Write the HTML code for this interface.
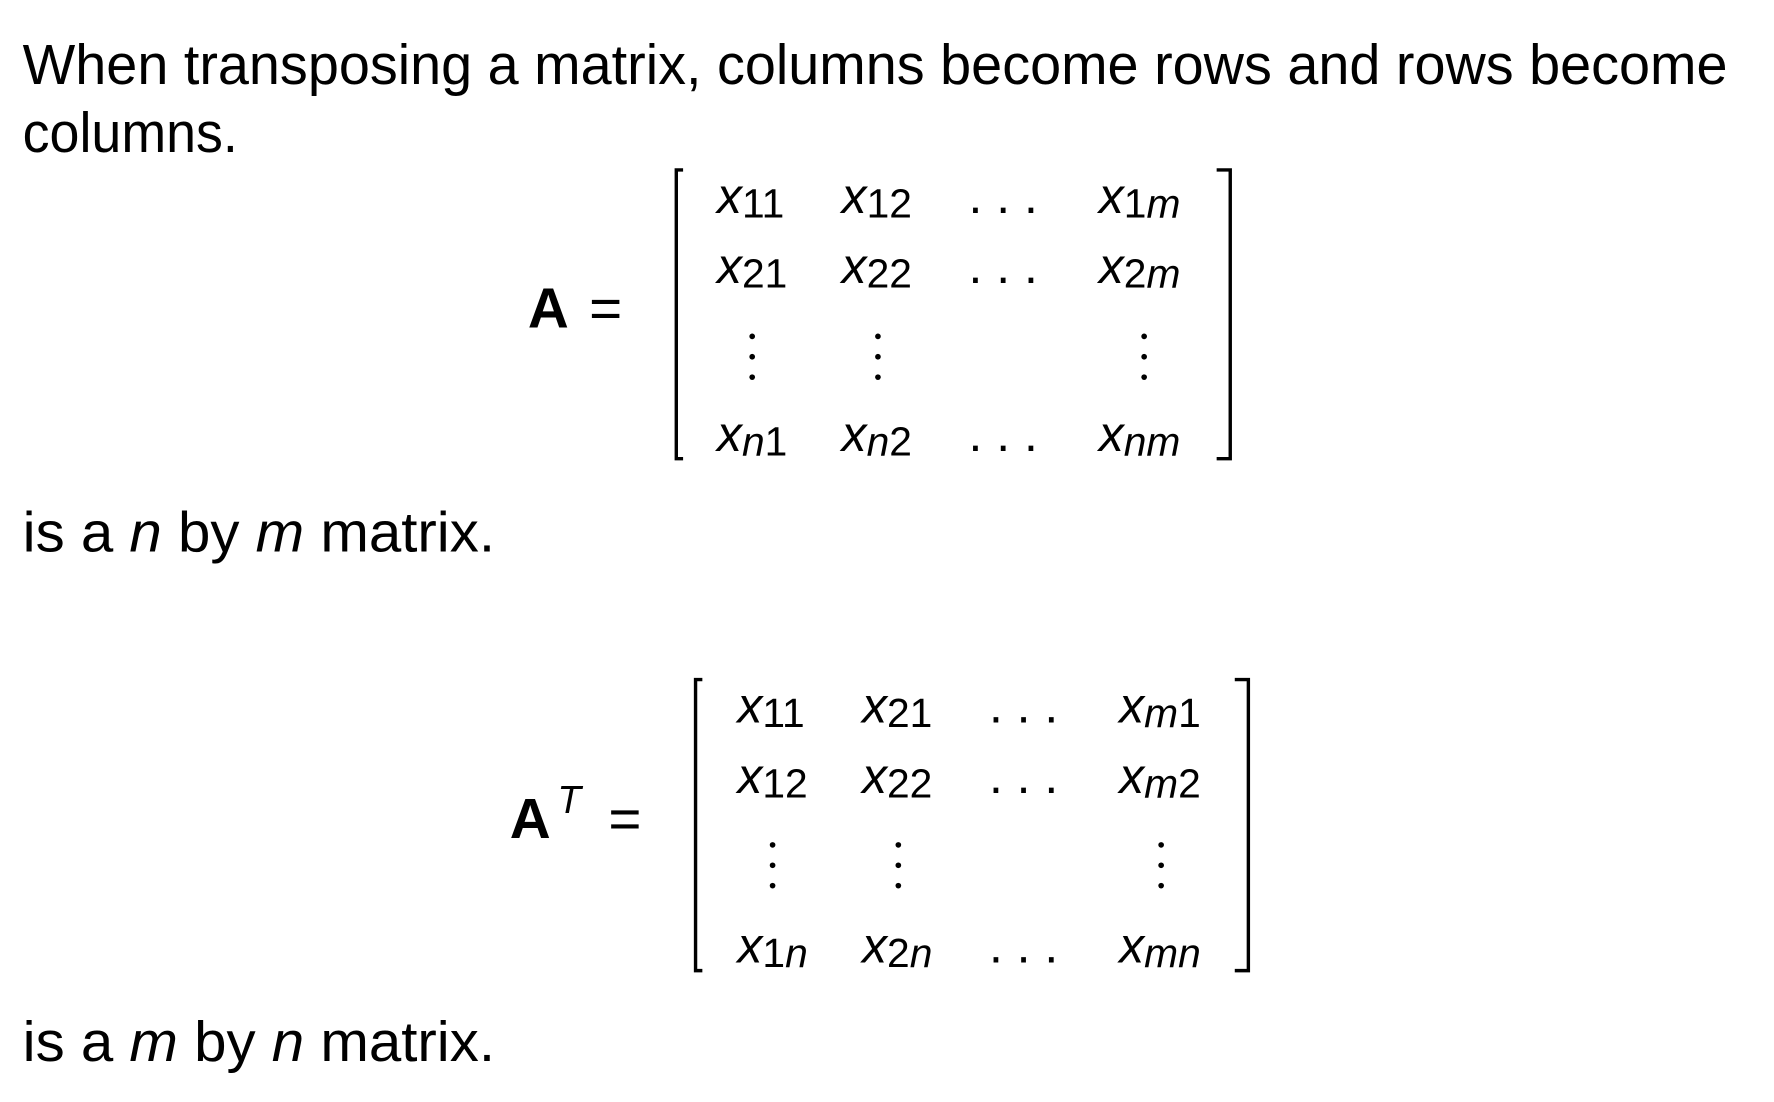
<!DOCTYPE html>
<html><head><meta charset="utf-8"><style>
html,body{margin:0;padding:0;background:#fff;}
svg{display:block}
text{font-family:"Liberation Sans",sans-serif;fill:#000}
.i{font-style:italic}
.s{font-size:36px}
</style></head><body>
<svg width="1774" height="1102" viewBox="0 0 1566 973" preserveAspectRatio="none" xmlns="http://www.w3.org/2000/svg">
<g font-size="50">
<text x="20" y="74" textLength="1505" lengthAdjust="spacingAndGlyphs">When transposing a matrix, columns become rows and rows become</text>
<text x="20" y="134" textLength="190" lengthAdjust="spacingAndGlyphs">columns.</text>
<text x="20" y="487" textLength="417" lengthAdjust="spacingAndGlyphs">is a <tspan class="i">n</tspan> by <tspan class="i">m</tspan> matrix.</text>
<text x="20" y="937" textLength="417" lengthAdjust="spacingAndGlyphs">is a <tspan class="i">m</tspan> by <tspan class="i">n</tspan> matrix.</text>
<text x="466" y="289" font-weight="bold">A</text>
<text x="520" y="289">=</text>
</g>
<g fill="none" stroke="#000" stroke-width="3">
<path d="M603 150 H597 V405 H603"/>
<path d="M1074 150 H1086 V405 H1074"/>
<path d="M620 600 H614 V857 H620"/>
<path d="M1090 600 H1102 V857 H1090"/>
</g>
<g font-size="44">
<text x="633" y="188"><tspan class="i">x</tspan><tspan class="s" dy="4">11</tspan></text>
<text x="743" y="188"><tspan class="i">x</tspan><tspan class="s" dy="4">12</tspan></text>
<text x="855" y="188">. . .</text>
<text x="970" y="188"><tspan class="i">x</tspan><tspan class="s" dy="4">1<tspan class="i">m</tspan></tspan></text>
<text x="633" y="250"><tspan class="i">x</tspan><tspan class="s" dy="4">21</tspan></text>
<text x="743" y="250"><tspan class="i">x</tspan><tspan class="s" dy="4">22</tspan></text>
<text x="855" y="250">. . .</text>
<text x="970" y="250"><tspan class="i">x</tspan><tspan class="s" dy="4">2<tspan class="i">m</tspan></tspan></text>
<text x="633" y="398"><tspan class="i">x</tspan><tspan class="s" dy="4"><tspan class="i">n</tspan>1</tspan></text>
<text x="743" y="398"><tspan class="i">x</tspan><tspan class="s" dy="4"><tspan class="i">n</tspan>2</tspan></text>
<text x="855" y="398">. . .</text>
<text x="970" y="398"><tspan class="i">x</tspan><tspan class="s" dy="4"><tspan class="i">nm</tspan></tspan></text>
</g>
<g fill="#000">
<circle cx="664" cy="297" r="2.5"/><circle cx="664" cy="315" r="2.5"/><circle cx="664" cy="333" r="2.5"/>
<circle cx="775" cy="297" r="2.5"/><circle cx="775" cy="315" r="2.5"/><circle cx="775" cy="333" r="2.5"/>
<circle cx="1010" cy="297" r="2.5"/><circle cx="1010" cy="315" r="2.5"/><circle cx="1010" cy="333" r="2.5"/>
<circle cx="682" cy="746" r="2.5"/><circle cx="682" cy="764" r="2.5"/><circle cx="682" cy="782" r="2.5"/>
<circle cx="793" cy="746" r="2.5"/><circle cx="793" cy="764" r="2.5"/><circle cx="793" cy="782" r="2.5"/>
<circle cx="1025" cy="746" r="2.5"/><circle cx="1025" cy="764" r="2.5"/><circle cx="1025" cy="782" r="2.5"/>
</g>
<g font-size="50">
<text x="450" y="740" font-weight="bold">A</text>
<text x="492" y="718" font-size="34" class="i">T</text>
<text x="537" y="740">=</text>
</g>
<g font-size="44">
<text x="651" y="638"><tspan class="i">x</tspan><tspan class="s" dy="4">11</tspan></text>
<text x="761" y="638"><tspan class="i">x</tspan><tspan class="s" dy="4">21</tspan></text>
<text x="873" y="638">. . .</text>
<text x="988" y="638"><tspan class="i">x</tspan><tspan class="s" dy="4"><tspan class="i">m</tspan>1</tspan></text>
<text x="651" y="700"><tspan class="i">x</tspan><tspan class="s" dy="4">12</tspan></text>
<text x="761" y="700"><tspan class="i">x</tspan><tspan class="s" dy="4">22</tspan></text>
<text x="873" y="700">. . .</text>
<text x="988" y="700"><tspan class="i">x</tspan><tspan class="s" dy="4"><tspan class="i">m</tspan>2</tspan></text>
<text x="651" y="850"><tspan class="i">x</tspan><tspan class="s" dy="4">1<tspan class="i">n</tspan></tspan></text>
<text x="761" y="850"><tspan class="i">x</tspan><tspan class="s" dy="4">2<tspan class="i">n</tspan></tspan></text>
<text x="873" y="850">. . .</text>
<text x="988" y="850"><tspan class="i">x</tspan><tspan class="s" dy="4"><tspan class="i">mn</tspan></tspan></text>
</g>
</svg>
</body></html>
